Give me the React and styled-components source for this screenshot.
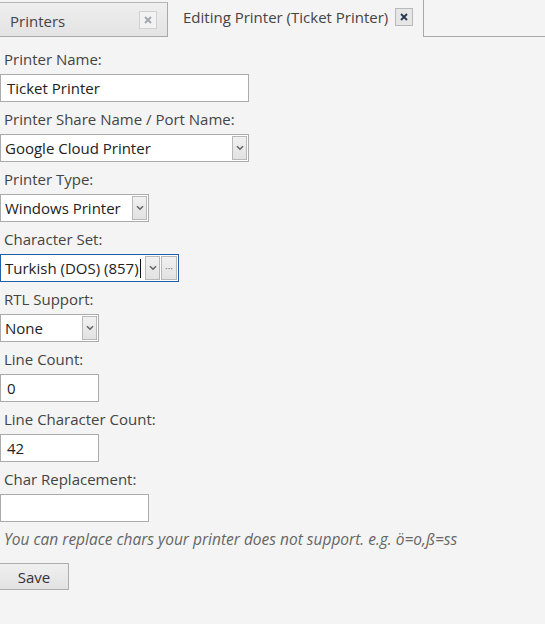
import React from 'react';
import styled, { createGlobalStyle } from 'styled-components';

const GlobalStyle = createGlobalStyle`
    body {
        margin: 0;
        background: #f4f4f4;
        font-family: "Open Sans", "Noto Sans", sans-serif;
        font-size: 15px;
        color: #333;
    }
`;

const Page = styled.div`
    width: 545px;
    height: 624px;
    background: #f4f4f4;
    overflow: hidden;
`;

const TabBar = styled.div`
    display: flex;
    height: 37px;
    align-items: flex-end;
`;

const Tab = styled.div`
    display: flex;
    align-items: center;
    box-sizing: border-box;
    height: ${p => (p.active ? '37px' : '35px')};
    padding: ${p => (p.active ? '0 10px 3px 15px' : '0 10px 0 10px')};
    background: ${p => (p.active ? '#f4f4f4' : 'linear-gradient(#efefef, #e3e3e3)')};
    border: 1px solid #a9a9a9;
    border-left: 0;
    border-bottom: ${p => (p.active ? 'none' : '1px solid #a9a9a9')};
    border-top: ${p => (p.active ? 'none' : '1px solid #b5b5b5')};
    width: ${p => p.width}px;
    gap: 4px;
    color: #444;
`;

const TabTitle = styled.span`
    flex: 1;
    white-space: nowrap;
    font-size: 15px;
    padding-top: ${p => (p.active ? '0' : '3px')};
`;

const CloseBox = styled.span`
    display: flex;
    align-items: center;
    justify-content: center;
    width: 16px;
    height: 16px;
    border: 1px solid ${p => (p.active ? '#b9b9b9' : '#d0d0d0')};
    background: ${p => (p.active ? '#e6e6e6' : '#f2f2f2')};
`;

const TabFiller = styled.div`
    flex: 1;
    height: 37px;
    box-sizing: border-box;
    border-bottom: 1px solid #a9a9a9;
`;

const Form = styled.div`
    display: flex;
    flex-direction: column;
    padding-top: 12px;
`;

const Field = styled.div`
    display: flex;
    flex-direction: column;
    align-items: flex-start;
    margin-bottom: 7px;
`;

const Label = styled.label`
    line-height: 20px;
    padding-left: 4px;
    margin-bottom: 5px;
    color: #444;
`;

const TextBox = styled.div`
    box-sizing: border-box;
    width: ${p => p.width}px;
    height: 28px;
    line-height: 26px;
    padding-left: 6px;
    background: #fff;
    border: 1px solid #ababab;
    color: #222;
`;

const SelectBox = styled.div`
    box-sizing: border-box;
    display: flex;
    align-items: center;
    width: ${p => p.width}px;
    height: 28px;
    padding: 1px;
    padding-left: 4px;
    background: #fff;
    border: 1px solid ${p => (p.focused ? '#2060a8' : '#ababab')};
    color: #222;
    gap: 1px;
`;

const SelectText = styled.span`
    flex: 1;
    white-space: nowrap;
    overflow: hidden;
    display: flex;
    align-items: center;
`;

const Caret = styled.span`
    display: inline-block;
    width: 1px;
    height: 19px;
    background: #111;
    margin-left: 1px;
`;

const DropButton = styled.span`
    box-sizing: border-box;
    flex: none;
    display: flex;
    align-items: center;
    justify-content: center;
    width: ${p => (p.wide ? 16 : 15)}px;
    height: 24px;
    background: linear-gradient(#f1f1f1, #e2e2e2);
    border: 1px solid #b8b8b8;
    color: #777;
    font-size: 10px;
`;

const Hint = styled.div`
    font-style: italic;
    font-size: 15.5px;
    color: #666;
    line-height: 20px;
    padding-left: 4px;
    margin-top: 0;
    margin-bottom: 14px;
`;

const SaveButton = styled.button`
    box-sizing: border-box;
    width: 69px;
    height: 27px;
    font-family: inherit;
    font-size: 15px;
    color: #333;
    background: linear-gradient(#f0f0f0, #e2e2e2);
    border: 1px solid #acacac;
    border-left: none;
    padding: 0;
    text-align: center;
`;

const Chevron = () => (
    <svg width="8" height="6" viewBox="0 0 8 6">
        <path d="M1 1.2 L4 4.2 L7 1.2" fill="none" stroke="#666" strokeWidth="1.6" />
    </svg>
);

const Cross = ({ color }) => (
    <svg width="8" height="8" viewBox="0 0 8 8">
        <path d="M1 1 L7 7 M7 1 L1 7" stroke={color} strokeWidth="1.8" />
    </svg>
);

const Select = ({ width, value, focused, extra }) => (
    <SelectBox width={width} focused={focused}>
        <SelectText>
            {value}
            {focused && <Caret />}
        </SelectText>
        <DropButton><Chevron /></DropButton>
        {extra && <DropButton wide>···</DropButton>}
    </SelectBox>
);

const App = () => {
    return (
        <Page>
            <GlobalStyle />
            <TabBar>
                <Tab width={168}>
                    <TabTitle>Printers</TabTitle>
                    <CloseBox><Cross color="#a0a6ae" /></CloseBox>
                </Tab>
                <Tab active width={256}>
                    <TabTitle active>Editing Printer (Ticket Printer)</TabTitle>
                    <CloseBox active><Cross color="#26364f" /></CloseBox>
                </Tab>
                <TabFiller />
            </TabBar>
            <Form>
                <Field>
                    <Label>Printer Name:</Label>
                    <TextBox width={249}>Ticket Printer</TextBox>
                </Field>
                <Field>
                    <Label>Printer Share Name / Port Name:</Label>
                    <Select width={249} value="Google Cloud Printer" />
                </Field>
                <Field>
                    <Label>Printer Type:</Label>
                    <Select width={149} value="Windows Printer" />
                </Field>
                <Field>
                    <Label>Character Set:</Label>
                    <Select width={179} value="Turkish (DOS) (857)" focused extra />
                </Field>
                <Field>
                    <Label>RTL Support:</Label>
                    <Select width={99} value="None" />
                </Field>
                <Field>
                    <Label>Line Count:</Label>
                    <TextBox width={99}>0</TextBox>
                </Field>
                <Field>
                    <Label>Line Character Count:</Label>
                    <TextBox width={99}>42</TextBox>
                </Field>
                <Field>
                    <Label>Char Replacement:</Label>
                    <TextBox width={149} />
                </Field>
                <Hint>You can replace chars your printer does not support. e.g. ö=o,ß=ss</Hint>
                <div>
                    <SaveButton>Save</SaveButton>
                </div>
            </Form>
        </Page>
    );
};

export default App;
